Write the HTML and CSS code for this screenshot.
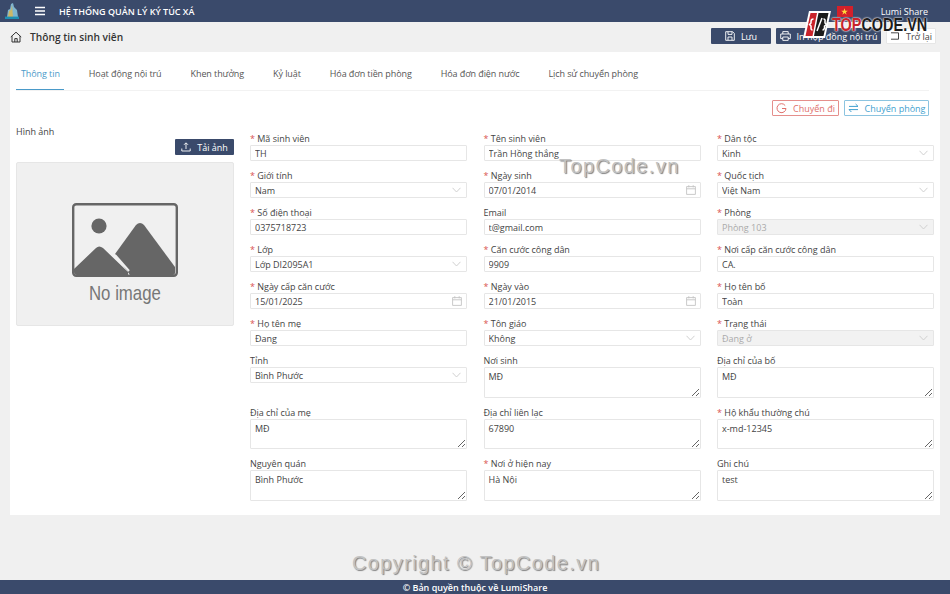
FILE: index.html
```html
<!DOCTYPE html>
<html lang="vi">
<head>
    <meta charset="UTF-8">
    <meta name="viewport" content="width=device-width, initial-scale=1.0">
    <title>Thông tin sinh viên</title>
    <link rel="stylesheet" href="styles.css">
</head>
<body>
    <header class="topbar">
        <svg class="logo" width="14" height="16" viewBox="0 0 14 16">
            <path d="M2 14 L3 7 L5 6 L6 1 L8 0 L9 4 L12 7 L13 14 Z" fill="#7fb6cf"/>
            <path d="M3 14 L4 8 L6 7 L7 2 L8 14 Z" fill="#cdb765"/>
            <path d="M0 13.6 H14 V16 H0 Z" fill="#1f8fb3"/>
        </svg>
        <svg class="menu" width="12" height="10" viewBox="0 0 12 10">
            <path d="M1 1.5H11M1 5H11M1 8.5H11" stroke="#fff" stroke-width="1.4"/>
        </svg>
        <span class="app-title">HỆ THỐNG QUẢN LÝ KÝ TÚC XÁ</span>
        <span class="flag"><svg width="7" height="7" viewBox="0 0 10 10"><path d="M5 0.5 L6.2 3.8 L9.8 3.8 L6.9 5.9 L8 9.5 L5 7.3 L2 9.5 L3.1 5.9 L0.2 3.8 L3.8 3.8 Z" fill="#ffd83a"/></svg></span>
        <span class="user">Lumi Share</span>
    </header>

    <div class="pagebar">
        <svg width="12" height="12" viewBox="0 0 12 12" fill="none" stroke="#333" stroke-width="1">
            <path d="M0.8 6 L6 1.2 L11.2 6"/>
            <path d="M2 5.2V11H10V5.2"/>
            <path d="M4.8 11V7.6H7.2V11"/>
        </svg>
        <h1>Thông tin sinh viên</h1>
        <div class="page-actions">
            <button class="btn btn-dark btn-save">
                <svg width="10" height="10" viewBox="0 0 10 10" fill="none" stroke="#fff" stroke-width="0.9"><path d="M0.7 0.7H7.6L9.3 2.4V9.3H0.7Z"/><path d="M3 0.7V3.4H7V0.7M3 9.3V6H7V9.3"/></svg>
                Lưu
            </button>
            <button class="btn btn-dark btn-print">
                <svg width="11" height="10" viewBox="0 0 11 10" fill="none" stroke="#fff" stroke-width="0.9"><path d="M2.8 3V0.6H8.2V3M2.8 7.6H0.7V3H10.3V7.6H8.2"/><path d="M2.8 6H8.2V9.4H2.8Z"/></svg>
                In hợp đồng nội trú
            </button>
            <button class="btn btn-light btn-back">
                <svg width="10" height="8" viewBox="0 0 10 8" fill="none" stroke="#333" stroke-width="0.9"><path d="M1 0.8H8.5V7.2H1"/></svg>
                Trở lại
            </button>
        </div>
    </div>

    <main class="card">
        <nav class="tabs">
            <a class="tab active">Thông tin</a>
            <a class="tab">Hoạt động nội trú</a>
            <a class="tab">Khen thưởng</a>
            <a class="tab">Kỷ luật</a>
            <a class="tab">Hóa đơn tiền phòng</a>
            <a class="tab">Hóa đơn điện nước</a>
            <a class="tab">Lịch sử chuyển phòng</a>
        </nav>

        <div class="card-actions">
            <button class="btn btn-red">
                <svg width="11" height="11" viewBox="0 0 11 11" fill="none" stroke="#e0706c" stroke-width="1"><path d="M9.2 2.6A4.5 4.5 0 1 0 10 5.5H6"/></svg>
                Chuyển đi
            </button>
            <button class="btn btn-blue">
                <svg width="11" height="10" viewBox="0 0 11 10" fill="none" stroke="#3f9fcf" stroke-width="1"><path d="M1 3.4H10L7.6 1M10 6.6H1L3.4 9"/></svg>
                Chuyển phòng
            </button>
        </div>

        <div class="content">
            <aside class="photo">
                <label class="photo-label">Hình ảnh</label>
                <button class="btn btn-dark btn-upload">
                    <svg width="10" height="10" viewBox="0 0 10 10" fill="none" stroke="#fff" stroke-width="0.9"><path d="M5 7V1M3 2.8L5 0.8L7 2.8M0.8 6.5V9H9.2V6.5"/></svg>
                    Tải ảnh
                </button>
                <div class="photo-box">
                    <svg width="106" height="75" viewBox="0 0 106 75">
                        <rect x="1.2" y="1.2" width="103.6" height="71.6" rx="3" fill="#f0f0f0" stroke="#666" stroke-width="2.4"/>
                        <circle cx="27" cy="23" r="7.6" fill="#666"/>
                        <path d="M43 51 L64 22 Q68 18 72 22 L103 64 V70 Q103 72 101 72 H58 Z" fill="#666"/>
                        <path d="M2 66 L24 45 Q27 42 31 45 L56 69 V72 H5 Q2 72 2 69 Z" fill="#666"/>
                        <path d="M43 52 L57 68" stroke="#f0f0f0" stroke-width="2"/>
                    </svg>
                    <span class="no-image">No image</span>
                </div>
            </aside>

            <form class="fields">
                <div class="field"><label class="req">Mã sinh viên</label><input class="ctl" value="TH"></div>
                <div class="field"><label class="req">Tên sinh viên</label><input class="ctl" value="Trần Hồng thắng"></div>
                <div class="field"><label class="req">Dân tộc</label><div class="wrap"><input class="ctl" value="Kinh"><svg class="chev" width="9" height="6" viewBox="0 0 9 6"><path d="M0.5 0.8L4.5 5L8.5 0.8" fill="none" stroke="#d0d0d0"/></svg></div></div>

                <div class="field"><label class="req">Giới tính</label><div class="wrap"><input class="ctl" value="Nam"><svg class="chev" width="9" height="6" viewBox="0 0 9 6"><path d="M0.5 0.8L4.5 5L8.5 0.8" fill="none" stroke="#d0d0d0"/></svg></div></div>
                <div class="field"><label class="req">Ngày sinh</label><div class="wrap"><input class="ctl" value="07/01/2014"><svg class="cal" width="10" height="10" viewBox="0 0 10 10" fill="none" stroke="#c4c4c4" stroke-width="0.9"><path d="M0.6 1.6H9.4V9.4H0.6ZM0.6 3.8H9.4M2.8 0.2V2.4M7.2 0.2V2.4"/></svg></div></div>
                <div class="field"><label class="req">Quốc tịch</label><div class="wrap"><input class="ctl" value="Việt Nam"><svg class="chev" width="9" height="6" viewBox="0 0 9 6"><path d="M0.5 0.8L4.5 5L8.5 0.8" fill="none" stroke="#d0d0d0"/></svg></div></div>

                <div class="field"><label class="req">Số điện thoại</label><input class="ctl" value="0375718723"></div>
                <div class="field"><label>Email</label><input class="ctl" value="t@gmail.com"></div>
                <div class="field"><label class="req">Phòng</label><div class="wrap"><input class="ctl off" value="Phòng 103" disabled><svg class="chev" width="9" height="6" viewBox="0 0 9 6"><path d="M0.5 0.8L4.5 5L8.5 0.8" fill="none" stroke="#d0d0d0"/></svg></div></div>

                <div class="field"><label class="req">Lớp</label><div class="wrap"><input class="ctl" value="Lớp DI2095A1"><svg class="chev" width="9" height="6" viewBox="0 0 9 6"><path d="M0.5 0.8L4.5 5L8.5 0.8" fill="none" stroke="#d0d0d0"/></svg></div></div>
                <div class="field"><label class="req">Căn cước công dân</label><input class="ctl" value="9909"></div>
                <div class="field"><label class="req">Nơi cấp căn cước công dân</label><input class="ctl" value="CA."></div>

                <div class="field"><label class="req">Ngày cấp căn cước</label><div class="wrap"><input class="ctl" value="15/01/2025"><svg class="cal" width="10" height="10" viewBox="0 0 10 10" fill="none" stroke="#c4c4c4" stroke-width="0.9"><path d="M0.6 1.6H9.4V9.4H0.6ZM0.6 3.8H9.4M2.8 0.2V2.4M7.2 0.2V2.4"/></svg></div></div>
                <div class="field"><label class="req">Ngày vào</label><div class="wrap"><input class="ctl" value="21/01/2015"><svg class="cal" width="10" height="10" viewBox="0 0 10 10" fill="none" stroke="#c4c4c4" stroke-width="0.9"><path d="M0.6 1.6H9.4V9.4H0.6ZM0.6 3.8H9.4M2.8 0.2V2.4M7.2 0.2V2.4"/></svg></div></div>
                <div class="field"><label class="req">Họ tên bố</label><input class="ctl" value="Toàn"></div>

                <div class="field"><label class="req">Họ tên mẹ</label><input class="ctl" value="Đang"></div>
                <div class="field"><label class="req">Tôn giáo</label><div class="wrap"><input class="ctl" value="Không"><svg class="chev" width="9" height="6" viewBox="0 0 9 6"><path d="M0.5 0.8L4.5 5L8.5 0.8" fill="none" stroke="#d0d0d0"/></svg></div></div>
                <div class="field"><label class="req">Trạng thái</label><div class="wrap"><input class="ctl off" value="Đang ở" disabled><svg class="chev" width="9" height="6" viewBox="0 0 9 6"><path d="M0.5 0.8L4.5 5L8.5 0.8" fill="none" stroke="#d0d0d0"/></svg></div></div>

                <div class="field"><label>Tỉnh</label><div class="wrap"><input class="ctl" value="Bình Phước"><svg class="chev" width="9" height="6" viewBox="0 0 9 6"><path d="M0.5 0.8L4.5 5L8.5 0.8" fill="none" stroke="#d0d0d0"/></svg></div></div>
                <div class="field"><label>Nơi sinh</label><textarea class="ctl area">MĐ</textarea></div>
                <div class="field"><label>Địa chỉ của bố</label><textarea class="ctl area">MĐ</textarea></div>

                <div class="field"><label>Địa chỉ của mẹ</label><textarea class="ctl area">MĐ</textarea></div>
                <div class="field"><label>Địa chỉ liên lạc</label><textarea class="ctl area">67890</textarea></div>
                <div class="field"><label class="req">Hộ khẩu thường chú</label><textarea class="ctl area">x-md-12345</textarea></div>

                <div class="field"><label>Nguyên quán</label><textarea class="ctl area">Bình Phước</textarea></div>
                <div class="field"><label class="req">Nơi ở hiện nay</label><textarea class="ctl area">Hà Nội</textarea></div>
                <div class="field"><label>Ghi chú</label><textarea class="ctl area">test</textarea></div>
            </form>
        </div>
    </main>

    <footer class="footer">© Bản quyền thuộc về LumiShare</footer>

    <!-- watermarks sit over the page -->
    <div class="wm wm-mid">TopCode.vn</div>
    <div class="wm wm-copy">Copyright © TopCode.vn</div>
    <div class="wm-logo">
        <svg width="28" height="27" viewBox="0 0 28 27">
            <path d="M6 0H28L22 27H0Z" fill="#fff"/>
            <path d="M7.5 2H14L9.5 25H2.5Z" fill="#c9232a"/>
            <path d="M15.5 2H25.5L20.5 25H11Z" fill="#1b1b1b"/>
            <path d="M10.5 8Q8 8 8 10.5V12L6.5 13.5L8 15V17Q8 19 9.5 19" fill="none" stroke="#fff" stroke-width="1.5"/>
            <path d="M19 7L14 20" stroke="#fff" stroke-width="1.5"/>
            <path d="M20.5 8Q22.5 8 22 10.5V12L23.5 13.5L21.5 15V17Q21 19 19.5 19" fill="none" stroke="#fff" stroke-width="1.5"/>
        </svg>
        <span class="wm-logo-text"><b class="red">TOP</b>CODE.VN</span>
    </div>
</body>
</html>
```

FILE: styles.css
```css
* {
    box-sizing: border-box;
}
html, body {
    margin: 0;
    height: 594px;
    overflow: hidden;
}
body {
    position: relative;
    display: flex;
    flex-direction: column;
    background-color: #f0f0f0;
    font-family: "Open Sans", "Noto Sans", sans-serif;
    font-size: 9px;
    color: #444;
}
button, input, textarea {
    font-family: inherit;
}

/* top bar */
.topbar {
    height: 22px;
    flex: none;
    display: flex;
    align-items: center;
    padding: 0 22px 0 5px;
    background-color: #3a4a6b;
    color: #fff;
}
.menu {
    margin-left: 15px;
}
.app-title {
    margin-left: 13px;
    font-size: 9px;
    font-weight: 600;
}
.flag {
    margin-left: auto;
    width: 16px;
    height: 11px;
    display: flex;
    align-items: center;
    justify-content: center;
    background-color: #d3202a;
}
.user {
    margin-left: 28px;
    font-size: 9px;
}

/* page title row */
.pagebar {
    height: 30px;
    flex: none;
    display: flex;
    align-items: center;
    padding: 0 14px 0 10px;
}
.pagebar h1 {
    margin: 0 0 0 8px;
    font-size: 10.2px;
    font-weight: 600;
    color: #333;
}
.page-actions {
    margin-left: auto;
    display: flex;
    gap: 5px;
    margin-top: -2px;
}
.btn {
    display: flex;
    align-items: center;
    justify-content: center;
    gap: 6px;
    height: 16px;
    padding: 0;
    border: 1px solid transparent;
    border-radius: 1px;
    font-size: 9px;
    white-space: nowrap;
}
.btn-dark {
    background-color: #3a4a6b;
    color: #fff;
}
.btn-light {
    background-color: #fff;
    border-color: #e6e6e6;
    color: #444;
}
.btn-save {
    width: 60px;
}
.btn-print {
    width: 105px;
}
.btn-back {
    width: 50px;
}
.btn-red {
    width: 67px;
    background-color: #fff;
    border-color: #e58f8c;
    color: #e0706c;
}
.btn-blue {
    width: 85px;
    background-color: #fff;
    border-color: #8cc4e0;
    color: #3f9fcf;
}

/* main card */
.card {
    height: 463px;
    flex: none;
    margin: 0 10px;
    padding: 0 11px 0 6px;
    background-color: #fff;
}
.tabs {
    height: 39px;
    display: flex;
    align-items: stretch;
    gap: 20px;
    border-bottom: 1px solid #f2f2f2;
    letter-spacing: -0.09px;
}
.tab {
    display: flex;
    align-items: center;
    padding: 5px 4px 0 5px;
    color: #555;
    font-size: 9px;
}
.tab.active {
    padding: 5px 4px 0 5px;
    color: #4a9ac9;
    border-bottom: 1px solid #4a9ac9;
}
.card-actions {
    display: flex;
    justify-content: flex-end;
    gap: 5px;
    margin-top: 9px;
}
.content {
    display: flex;
    margin-top: 9px;
    gap: 16px;
}

/* photo column */
.photo {
    width: 218px;
    flex: none;
    display: flex;
    flex-direction: column;
}
.photo-label {
    height: 13px;
    line-height: 13px;
}
.btn-upload {
    width: 59px;
    align-self: flex-end;
    margin-top: 1px;
}
.photo-box {
    margin-top: 7px;
    height: 163.5px;
    display: flex;
    flex-direction: column;
    align-items: center;
    padding-top: 40px;
    background-color: #f0f0f0;
    border: 1px solid #e6e6e6;
    border-radius: 2px;
}
.no-image {
    margin-top: 2px;
    font-family: "Liberation Sans", sans-serif;
    font-size: 21px;
    line-height: 26px;
    color: #777;
    transform: scaleX(0.8);
}

/* form grid */
.fields {
    flex: 1;
    display: grid;
    grid-template-columns: repeat(3, 217px);
    column-gap: 16.5px;
    row-gap: 7px;
    align-items: start;
    padding-top: 6px;
}
.field label {
    display: block;
    height: 14px;
    line-height: 15px;
    white-space: nowrap;
    letter-spacing: -0.02px;
}
.req::before {
    content: "* ";
    color: #d9534f;
}
.wrap {
    position: relative;
}
.ctl {
    display: block;
    width: 100%;
    height: 16px;
    padding: 0 4px;
    border: 1px solid #e6e6e6;
    border-radius: 1px;
    background-color: #fff;
    font-size: 9px;
    color: #444;
    outline: none;
}
.off {
    background-color: #f2f2f2;
    color: #aaa;
}
.area {
    height: 30.5px;
    padding: 2px 4px;
    resize: vertical;
}
.chev, .cal {
    position: absolute;
    top: 5px;
    right: 6px;
}
.cal {
    top: 3px;
    right: 5px;
}

.footer {
    margin-top: auto;
    height: 14px;
    flex: none;
    display: flex;
    align-items: center;
    justify-content: center;
    background-color: #3a4a6b;
    color: #fff;
    font-size: 9px;
    font-weight: 600;
}

/* watermarks */
.wm {
    position: absolute;
    font-family: "Liberation Sans", sans-serif;
    color: #c2c2c2;
    text-shadow: 1px 1px 1px #808080;
    white-space: nowrap;
}
.wm-mid {
    left: 559px;
    top: 155px;
    font-size: 20px;
    letter-spacing: 1.4px;
}
.wm-copy {
    left: 352px;
    top: 552px;
    font-size: 20px;
    letter-spacing: 1.38px;
}
.wm-logo {
    position: absolute;
    left: 803px;
    top: 11px;
    display: flex;
    align-items: center;
    gap: 1px;
}
.wm-logo-text {
    font-family: "Liberation Sans", sans-serif;
    font-size: 19px;
    font-weight: 700;
    color: #1c1c1c;
    text-shadow: 0 0 2px #fff, 0 0 2px #fff;
    transform: scaleX(0.76);
    transform-origin: left center;
}
.wm-logo-text .red {
    color: #c9232a;
}
```
